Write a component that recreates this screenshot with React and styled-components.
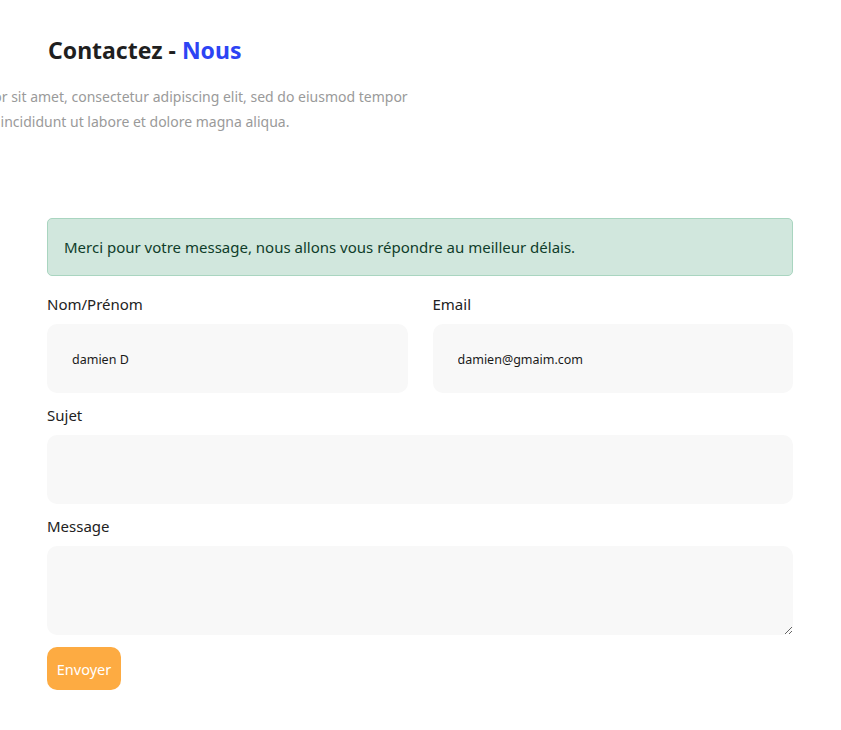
import React from "react";
import styled, { createGlobalStyle } from "styled-components";

const GlobalStyle = createGlobalStyle`
  * { box-sizing: border-box; }
  body {
    margin: 0;
    background: #fff;
    font-family: "Segoe UI", "Noto Sans", "Open Sans", sans-serif;
    color: #212529;
    overflow: hidden;
  }
`;

const Page = styled.div`
  width: 841px;
  padding: 0 48px 0 47px;
`;

const Header = styled.header`
  padding-top: 34px;
  height: 218px;
`;

const Title = styled.h2`
  margin: 0 0 0 1px;
  font-size: 23px;
  font-weight: 700;
  line-height: 32px;
  color: #1f1f1f;

  span {
    color: #2d44f4;
  }
`;

const Intro = styled.p`
  margin: 18px 0 0 -222px;
  width: 640px;
  text-align: center;
  font-size: 14px;
  line-height: 25px;
  color: #9a9a9a;
`;

const Alert = styled.div`
  padding: 16px;
  border: 1px solid #a9d5c0;
  border-radius: 5px;
  background: #d1e7dd;
  color: #0f3d2a;
  font-size: 15px;
  line-height: 24px;
  margin-bottom: 16px;
`;

const Row = styled.div`
  display: grid;
  grid-template-columns: ${p => (p.cols === 2 ? "1fr 1fr" : "1fr")};
  column-gap: 25px;
`;

const Field = styled.div`
  display: flex;
  flex-direction: column;
  margin-top: ${p => (p.first ? "0" : "10px")};
`;

const Label = styled.label`
  font-size: 15px;
  line-height: 24px;
  margin-bottom: 8px;
  color: #222;
`;

const Input = styled.input`
  height: 69px;
  border: none;
  border-radius: 10px;
  background: #f8f8f8;
  padding: 2px 25px 0;
  font-family: inherit;
  font-size: 12.5px;
  color: #1a1a1a;
  outline: none;
`;

const TextArea = styled.textarea`
  height: 89px;
  border: none;
  border-radius: 10px;
  background: #f8f8f8;
  padding: 12px 25px;
  font-family: inherit;
  font-size: 12.5px;
  outline: none;
  resize: vertical;
  display: block;
`;

const Button = styled.button`
  margin-top: 12px;
  width: 74px;
  height: 43px;
  border: none;
  border-radius: 10px;
  background: #fdab42;
  color: #fff;
  font-family: inherit;
  font-size: 14.5px;
  cursor: pointer;
`;

export default function App() {
  return (
    <>
      <GlobalStyle />
      <Page>
        <Header>
          <Title>
            Contactez - <span>Nous</span>
          </Title>
          <Intro>
            Lorem ipsum dolor sit amet, consectetur adipiscing elit, sed do eiusmod tempor
            <br />
            incididunt ut labore et dolore magna aliqua.
          </Intro>
        </Header>
        <form onSubmit={e => e.preventDefault()}>
          <Alert>Merci pour votre message, nous allons vous répondre au meilleur délais.</Alert>
          <Row cols={2}>
            <Field first>
              <Label>Nom/Prénom</Label>
              <Input defaultValue="damien D" />
            </Field>
            <Field first>
              <Label>Email</Label>
              <Input defaultValue="damien@gmaim.com" />
            </Field>
          </Row>
          <Row>
            <Field>
              <Label>Sujet</Label>
              <Input />
            </Field>
          </Row>
          <Row>
            <Field>
              <Label>Message</Label>
              <TextArea />
            </Field>
          </Row>
          <Button type="submit">Envoyer</Button>
        </form>
      </Page>
    </>
  );
}
